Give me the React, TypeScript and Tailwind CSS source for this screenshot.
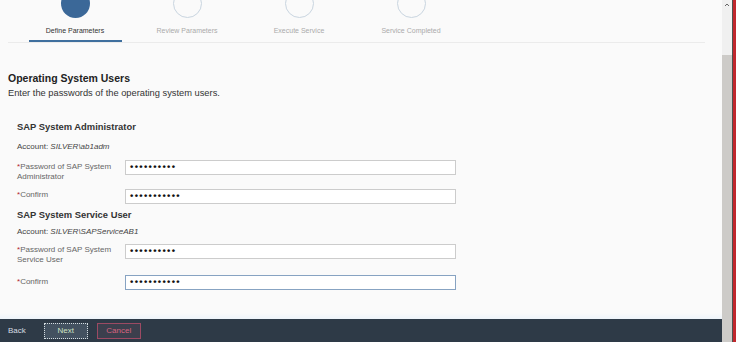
import React from 'react';

const steps = ['Define Parameters', 'Review Parameters', 'Execute Service', 'Service Completed'];

const Stepper = () => (
  <div className="ml-[8px] mr-[17px] border-b border-[#ebebeb] pl-[11px] flex">
    {steps.map((s, i) => (
      <div key={s} className="w-[112px] flex flex-col items-center">
        <div
          className={
            i === 0
              ? 'mt-[-11px] w-[29px] h-[29px] rounded-full bg-[#3b6898]'
              : 'mt-[-11px] w-[29px] h-[29px] rounded-full border border-[#c9d5e0]'
          }
        />
        <div
          className={
            'mt-[8px] h-[9px] text-[7px] leading-[9px] whitespace-nowrap ' +
            (i === 0 ? 'text-[#333]' : 'text-[#aaa]')
          }
        >
          {s}
        </div>
        <div className={'mt-[5px] h-[2px] w-[93px] ' + (i === 0 ? 'bg-[#3f6f9e]' : '')} />
      </div>
    ))}
  </div>
);

// required-field label: the red star comes from a ::before so the wrapped text starts under it
const Field = ({ label, dots, focused, className }) => (
  <div className={'flex items-start ' + className}>
    <div className="w-[108px] pt-[1.5px] pr-[6px] text-[8px] leading-[10px] text-[#666] before:content-['*'] before:text-[#b3262c]">
      {label}
    </div>
    <div
      className={
        'w-[331px] h-[15px] bg-white flex items-center pl-[4px] text-[9.5px] tracking-[1.3px] text-[#111] font-bold ' +
        (focused ? 'border border-[#87a3c2]' : 'border border-[#cccccc]')
      }
    >
      {'•'.repeat(dots)}
    </div>
  </div>
);

export default function App() {
  return (
    <div className="w-[741px] h-[342px] flex bg-white overflow-hidden font-['Liberation_Sans',Arial,sans-serif]">
      <div className="w-[722px] flex flex-col bg-[#fafafa]">
        <div className="flex-1 overflow-hidden">
          <Stepper />
          <div className="pl-[8px] mt-[29px] text-[10.5px] leading-[13px] font-bold text-[#222]">
            Operating System Users
          </div>
          <div className="pl-[8px] mt-[2px] text-[9.3px] leading-[12px] text-[#333]">
            Enter the passwords of the operating system users.
          </div>

          <div className="pl-[17px]">
            <div className="mt-[22px] text-[9.4px] leading-[12px] font-bold text-[#333]">SAP System Administrator</div>
            <div className="mt-[9px] text-[8px] leading-[10px] text-[#444]">
              Account: <span className="italic">SILVER\ab1adm</span>
            </div>
            <Field className="mt-[8px]" label="Password of SAP System Administrator" dots={10} />
            <Field className="mt-[7px]" label="Confirm" dots={11} />

            <div className="mt-[5px] text-[9.4px] leading-[12px] font-bold text-[#333]">SAP System Service User</div>
            <div className="mt-[6px] text-[8px] leading-[10px] text-[#444]">
              Account: <span className="italic">SILVER\SAPServiceAB1</span>
            </div>
            <Field className="mt-[7px]" label="Password of SAP System Service User" dots={10} />
            <Field className="mt-[10px]" label="Confirm" dots={11} focused />
          </div>
        </div>
        <div className="h-[6px] bg-gradient-to-b from-[#fafafa] to-[#eef4fa]" />
        <div className="h-[23px] bg-[#2e3a47] flex items-center pl-[8px] text-[8px]">
          <span className="text-[#d8dde2]">Back</span>
          <button className="ml-[18px] w-[44px] h-[16px] border border-dotted border-[#d5dde2] bg-[#435160] text-[#cfe3c4] text-[8px]">
            Next
          </button>
          <button className="ml-[9px] w-[44px] h-[16px] border border-[#9c4a63] bg-[#3c3f4d] text-[#d8637f] text-[8px]">
            Cancel
          </button>
        </div>
      </div>
      <div className="w-[10px] flex flex-col">
        <div className="h-[55px] bg-[#f0f0f0] flex justify-center">
          <svg width="6" height="6" viewBox="0 0 6 6" className="mt-[2px]">
            <path d="M1 4 L3 2 L5 4" stroke="#666" strokeWidth="1" fill="none" />
          </svg>
        </div>
        <div className="flex-1 bg-[#cdcbc8]" />
      </div>
      <div className="w-[1px] bg-[#4e5350]" />
      <div className="w-[3px] bg-[#c1272d]" />
      <div className="flex-1 bg-white" />
    </div>
  );
}
